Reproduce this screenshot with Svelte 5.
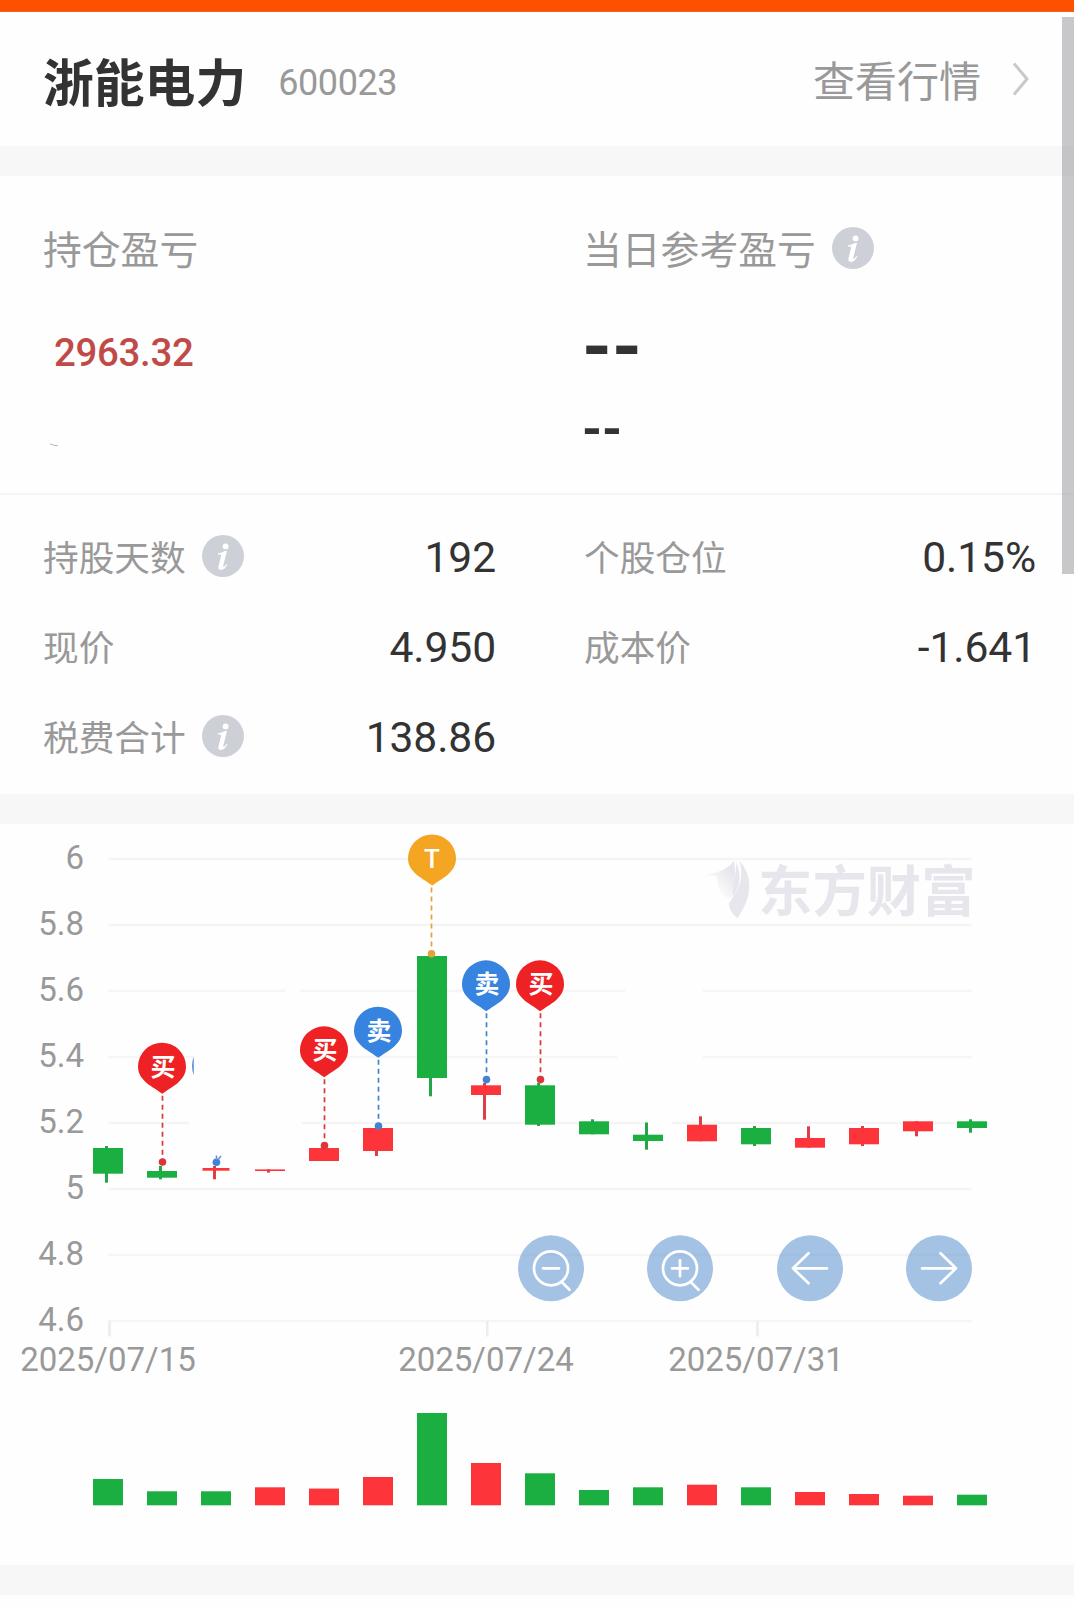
<script>
  const stats = [
    { label: '持股天数', info: true, value: '192' },
    { label: '个股仓位', info: false, value: '0.15%' },
    { label: '现价', info: false, value: '4.950' },
    { label: '成本价', info: false, value: '-1.641' },
    { label: '税费合计', info: true, value: '138.86' }
  ];

  const GREEN = '#1aaf40';
  const RED = '#fd3439';
  const STEP = 54;
  const centre = (i) => 108 + STEP * i;

  const ticks = ['6', '5.8', '5.6', '5.4', '5.2', '5', '4.8', '4.6'];
  const tickY = (i) => 35 + 66 * i;

  // Horizontal grid segments per price level: [from, to]
  const gridLines = [
    [[108, 972]],
    [[108, 972]],
    [[108, 285], [300, 625], [703, 972]],
    [[108, 193], [300, 617], [703, 972]],
    [[108, 189], [302, 648], [672, 972]],
    [[108, 972]],
    [[108, 972]],
    [[108, 972]]
  ];

  const dates = [
    { tick: 109.5, x: 108, text: '2025/07/15' },
    { tick: 487.3, x: 486, text: '2025/07/24' },
    { tick: 757.5, x: 756, text: '2025/07/31' }
  ];

  // up = red; body and wick are [top, bottom]
  const candles = [
    { up: false, body: [324, 349.7], wick: [322, 358.7], vol: 26.3 },
    { up: false, body: [347, 353.7], wick: [342, 355.3], vol: 14 },
    { up: true, body: [344, 346.7], wick: [342, 355.3], w: 27, vol: 14, volDown: true },
    { up: true, body: [345.4, 347], wick: [345.4, 348.6], vol: 18 },
    { up: true, body: [324, 337], wick: [321, 337], vol: 16.7 },
    { up: true, body: [304, 327], wick: [303, 332], vol: 28.3 },
    { up: false, body: [132, 254], wick: [132, 272.3], vol: 92.3 },
    { up: true, body: [261.3, 271], wick: [259, 295.7], vol: 42.3 },
    { up: false, body: [261.3, 300.7], wick: [259, 302], vol: 32 },
    { up: false, body: [297.3, 310.3], wick: [295.3, 310.3], vol: 15.3 },
    { up: false, body: [310.7, 317], wick: [298.5, 325.7], vol: 18 },
    { up: true, body: [300.7, 317.3], wick: [292.3, 317.3], vol: 20.6 },
    { up: false, body: [304, 320.3], wick: [302, 322], vol: 18 },
    { up: true, body: [314, 323.7], wick: [302.3, 323.7], vol: 13.3 },
    { up: true, body: [304, 320.3], wick: [302, 322], vol: 11.3 },
    { up: true, body: [297.3, 307.3], wick: [297.3, 312.3], vol: 9.6 },
    { up: false, body: [297.3, 304], wick: [295.3, 308.7], vol: 10.6 }
  ];

  const pins = [
    { i: 1, text: '买', fill: '#ee2224', line: '#d8383a', top: 218.7 },
    { i: 4, text: '买', fill: '#ee2224', line: '#d8383a', top: 202.3 },
    { i: 5, text: '卖', fill: '#3783e0', line: '#4483d0', top: 182.7 },
    { i: 6, text: 'T', fill: '#f4a623', line: '#e6a23a', top: 10.5, shift: -1 },
    { i: 7, text: '卖', fill: '#3783e0', line: '#4483d0', top: 136.3 },
    { i: 8, text: '买', fill: '#ee2224', line: '#d8383a', top: 136.3 }
  ];

  const buttons = [
    { x: 551, kind: 'out', label: '缩小' },
    { x: 680, kind: 'in', label: '放大' },
    { x: 810, kind: 'left', label: '向左' },
    { x: 939, kind: 'right', label: '向右' }
  ];
</script>

{#snippet info()}
  <svg class="info" viewBox="0 0 42 42" aria-hidden="true">
    <circle cx="21" cy="21" r="21" fill="#cdd0d6" />
    <circle cx="23.6" cy="11.400" r="2.900" fill="#fff" />
    <path
      d="M16 18.200c2.700-.3 4.900-1.100 6.800-2.300h2.200l-3.700 14.600c-.3 1.300.2 1.700 1 1 .8-.6 1.500-1.500 2.200-2.500l.9.6c-1.800 3.400-3.900 5.400-6.400 5.400-2.200 0-3-1.500-2.500-3.700l2.500-10c.2-1.200-.1-1.900-1-1.900h-2z"
      fill="#fff"
    />
  </svg>
{/snippet}

<div class="page">
  <div class="topbar"></div>
  <header>
    <h1>浙能电力</h1>
    <span class="code">600023</span>
    <a class="quote" href="#quote">查看行情</a>
    <svg class="chevron" viewBox="0 0 16 34" aria-hidden="true">
      <path d="M1 1.500 14 17 1 32.500" fill="none" stroke="#c9c9cb" stroke-width="3" stroke-linejoin="round" />
    </svg>
  </header>
  <div class="gap"></div>

  <section class="summary">
    <div class="col">
      <div class="caption"><span class="title">持仓盈亏</span></div>
      <div class="profit">2963.32</div>
      <svg class="speck" viewBox="0 0 9 4" aria-hidden="true">
        <path d="M0 .8 4 2.300 8 2.800" fill="none" stroke="#b9a09a" stroke-width=".8" />
      </svg>
    </div>
    <div class="col">
      <div class="caption"><span class="title">当日参考盈亏</span>{@render info()}</div>
      <div class="dash large">--</div>
      <div class="dash small">--</div>
    </div>
  </section>

  <section class="stats">
    {#each stats as s}
      <div class="stat">
        <span class="name">{s.label}</span>
        {#if s.info}{@render info()}{/if}
        <span class="value">{s.value}</span>
      </div>
    {/each}
  </section>
  <div class="gap"></div>

  <svg class="chart" viewBox="0 0 1074 741">
    {#each gridLines as segments, i}
      {#each segments as [from, to]}
        <line x1={from} x2={to} y1={tickY(i)} y2={tickY(i)} stroke="#f5f5f5" stroke-width="2.600" />
      {/each}
      <text class="axis" x="84" y={tickY(i) + 9.6} text-anchor="end">{ticks[i]}</text>
    {/each}
    {#each dates as d}
      <line x1={d.tick} x2={d.tick} y1="497" y2="512.500" stroke="#ededed" stroke-width="2.600" />
      <text class="axis" x={d.x} y="547.300" text-anchor="middle">{d.text}</text>
    {/each}

    <!-- Brand watermark -->
    <defs>
      <linearGradient id="wing" x1="0" x2="1" y1="1" y2="0">
        <stop offset=".3" stop-color="#e7e6ec" stop-opacity=".1" />
        <stop offset=".8" stop-color="#e7e6ec" />
      </linearGradient>
    </defs>
    <g fill="#e7e6ec">
      <path d="M739.500 37C745 43 749.300 51 749.300 62 749.300 74 744 84 737.500 94.300 733 90 729 86 729 79 737 68 745 56 739.500 37z" />
      <path d="M736.500 38C742 54 740 63 732.500 73 733 60 736 52 736.500 38z" />
      <path d="M734 37C736 50 736 60 731 74 722 74 717 66 717 52 712 51 708 51 703 51.500 716 49 727 46 734 37z" fill="url(#wing)" />
      <text class="watermark" x="758" y="86.500">东方财富</text>
    </g>

    {#each candles as c, i}
      {@const w = c.w ?? 30}
      {@const fill = c.up ? RED : GREEN}
      <rect x={centre(i) - 3} width="3" y={c.wick[0]} height={c.wick[1] - c.wick[0]} fill={c.up ? '#dc4046' : '#26a548'} />
      <rect x={centre(i) - w / 2} width={w} y={c.body[0]} height={c.body[1] - c.body[0]} {fill} />
      <rect
        x={centre(i) - 15}
        width="30"
        y={681.3 - c.vol}
        height={c.vol}
        fill={c.volDown ? GREEN : fill}
      />
    {/each}

    <circle cx="216.400" cy="338.300" r="3.800" fill="#3f83d8" />
    <path d="M216.500 336V331.500M218.500 335 221 332" stroke="#5f95dc" stroke-width="1.600" />
    <path d="M193.600 232.500Q190.800 242 193.600 251.500z" fill="#2f79cc" />

    {#each pins as p}
      {@const x = centre(p.i)}
      {@const dx = 0.5 + (p.shift ?? 0)}
      <g transform="translate({x} {p.top})">
        <line x1={dx} x2={dx} y1="53" y2="117" stroke={p.line} stroke-width="1.700" stroke-dasharray="5 4" />
        <circle cx={dx} cy="119.300" r="3.800" fill={p.line} />
        <path d="M0 0A24 24 0 0 1 24 24C24 38 10 44 .3 51-9 44-24 38-24 24A24 24 0 0 1 0 0z" fill={p.fill} />
        <text class="pin" class:latin={p.text === 'T'} x={p.text === 'T' ? 0 : 1} y="33.200" text-anchor="middle">{p.text}</text>
      </g>
    {/each}

    {#each buttons as b}
      <g transform="translate({b.x} 444.300)" role="button" tabindex="-1" aria-label={b.label}>
        <circle r="33" fill="#6c9cd3" fill-opacity=".62" />
        <g fill="none" stroke="#fff" stroke-width="2.700" stroke-linecap="round" stroke-linejoin="round">
          {#if b.kind === 'left'}
            <path d="M17 0H-17M-1.500-15-17 0-1.500 15" />
          {:else if b.kind === 'right'}
            <path d="M-17 0H17M1.500-15 17 0 1.500 15" />
          {:else}
            <circle r="17" />
            <path d="M-8 0H8M11.500 14.500 18.500 21.500" />
            {#if b.kind === 'in'}<path d="M0-8V8" />{/if}
          {/if}
        </g>
      </g>
    {/each}
  </svg>
  <div class="gap"></div>
  <div class="scrollbar"></div>
</div>

<style>
  :global(body) {
    background: #fefefe;
  }
  .page {
    position: relative;
    width: 1074px;
    height: 1610px;
    overflow: hidden;
    background: #fefefe;
    font-family: Roboto, 'Noto Sans CJK SC', sans-serif;
    color: #333;
  }
  .topbar {
    height: 12px;
    box-sizing: border-box;
    background: #ff5000;
    border-bottom: 1px solid #ea6426;
  }
  header {
    display: flex;
    align-items: center;
    height: 134px;
    box-sizing: border-box;
    padding: 0 45px 0 43px;
  }
  h1 {
    margin: 0;
    padding-top: 11px;
    font-size: 50.8px;
    line-height: 60px;
    font-weight: 700;
  }
  .code {
    margin-left: 32px;
    padding-top: 7px;
    font-size: 36px;
    line-height: 44px;
    letter-spacing: -0.4px;
    color: #999;
  }
  .quote {
    margin-left: auto;
    padding-top: 8px;
    font-size: 42px;
    line-height: 50px;
    color: #999;
    text-decoration: none;
  }
  .chevron {
    width: 16px;
    height: 34px;
    margin-left: 32px;
  }
  .gap {
    height: 30px;
    background: #f7f7f7;
  }
  .summary {
    display: grid;
    grid-template-columns: 540px 1fr;
    height: 319px;
    box-sizing: border-box;
    padding: 51px 0 0 43px;
    border-bottom: 2px solid #f4f4f4;
  }
  .caption {
    display: flex;
    align-items: center;
    height: 44px;
    font-size: 38.8px;
    line-height: 44px;
    color: #999;
  }
  .title {
    padding-top: 4px;
  }
  .info {
    flex: none;
    width: 42px;
    height: 42px;
    margin: 0 0 2px 16px;
  }
  .profit {
    margin: 59px 0 0 11px;
    font-size: 38.4px;
    line-height: 46px;
    font-weight: 500;
    letter-spacing: -0.3px;
    color: #c04a48;
  }
  .speck {
    display: block;
    width: 9px;
    height: 4px;
    margin: 67px 0 0 7px;
  }
  .dash {
    font-weight: 700;
  }
  .large {
    margin: 31px 0 0 -1px;
    font-size: 76px;
    line-height: 90px;
  }
  .small {
    margin: 8px 0 0 -1px;
    font-size: 51px;
    line-height: 60px;
  }
  .stats {
    display: grid;
    grid-template-columns: 453px 452px;
    grid-template-rows: repeat(3, 90px);
    column-gap: 88px;
    height: 299px;
    box-sizing: border-box;
    padding: 17px 0 0 43px;
  }
  .stat {
    display: flex;
    align-items: center;
  }
  .name {
    padding-top: 4px;
    font-size: 35.7px;
    line-height: 44px;
    color: #999;
  }
  .value {
    margin-left: auto;
    padding-bottom: 1px;
    font-size: 42.6px;
    line-height: 50px;
    letter-spacing: -0.1px;
  }
  .chart {
    display: block;
    width: 1074px;
    height: 741px;
  }
  .axis {
    font-size: 33px;
    fill: #999;
  }
  .watermark {
    font-size: 54.4px;
    font-weight: 700;
  }
  .pin {
    font-size: 25px;
    font-weight: 700;
    fill: #fff;
  }
  .latin {
    font-size: 26px;
    font-weight: 500;
  }
  .scrollbar {
    position: absolute;
    top: 17px;
    right: 0;
    width: 12px;
    height: 557px;
    background: rgba(130, 130, 135, 0.43);
  }
</style>
